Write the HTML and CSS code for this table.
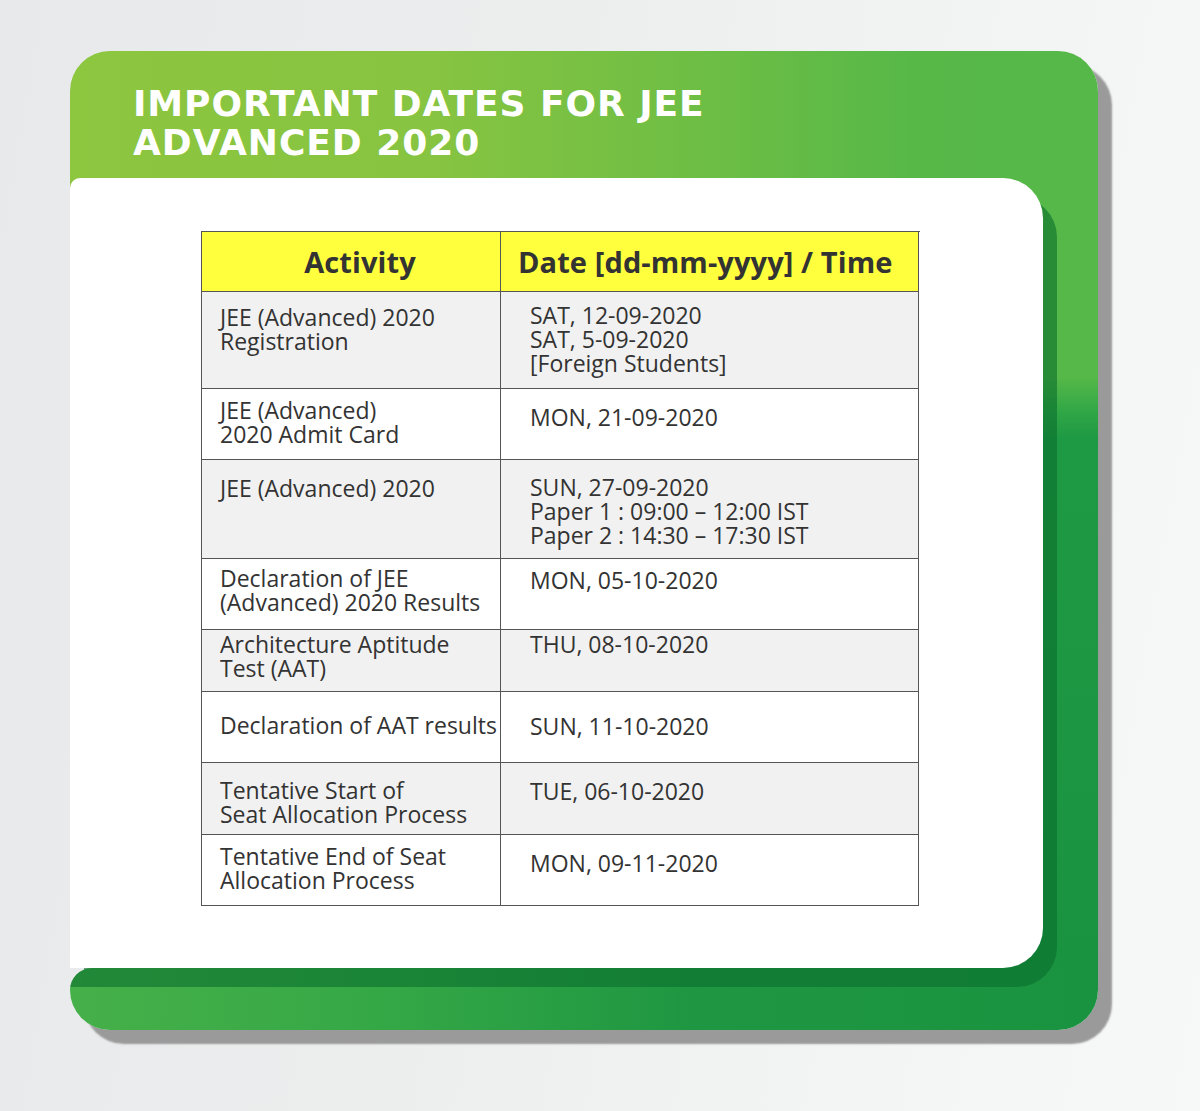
FILE: index.html
```html
<!DOCTYPE html>
<html lang="en">
<head>
<meta charset="utf-8">
<title>Important Dates for JEE Advanced 2020</title>
<link rel="stylesheet" href="styles.css">
</head>
<body>
<div class="card">
  <div class="head">
    <h1 class="title">IMPORTANT DATES FOR JEE<br>ADVANCED 2020</h1>
  </div>
  <div class="middle">
    <div class="panel">
      <div class="dates">
        <div class="th th-activity">Activity</div>
        <div class="th th-date">Date [dd-mm-yyyy] / Time</div>

        <div class="td odd p13">JEE (Advanced) 2020<br>Registration</div>
        <div class="td odd right p11">SAT, 12-09-2020<br>SAT, 5-09-2020<br>[Foreign Students]</div>

        <div class="td p9">JEE (Advanced)<br>2020 Admit Card</div>
        <div class="td right p16">MON, 21-09-2020</div>

        <div class="td odd p16">JEE (Advanced) 2020</div>
        <div class="td odd right p15">SUN, 27-09-2020<br>Paper 1 : 09:00 – 12:00 IST<br>Paper 2 : 14:30 – 17:30 IST</div>

        <div class="td p7">Declaration of JEE<br>(Advanced) 2020 Results</div>
        <div class="td right p9">MON, 05-10-2020</div>

        <div class="td odd p2">Architecture Aptitude<br>Test (AAT)</div>
        <div class="td odd right p2">THU, 08-10-2020</div>

        <div class="td p21">Declaration of AAT results</div>
        <div class="td right p22">SUN, 11-10-2020</div>

        <div class="td odd p15">Tentative Start of<br>Seat Allocation Process</div>
        <div class="td odd right p16">TUE, 06-10-2020</div>

        <div class="td p9">Tentative End of Seat<br>Allocation Process</div>
        <div class="td right p16">MON, 09-11-2020</div>
      </div>
    </div>
    <div class="strip"></div>
  </div>
  <div class="foot"></div>
</div>
</body>
</html>
```
FILE: styles.css
```css
html, body {
  margin: 0;
  padding: 0;
}
body {
  width: 1200px;
  height: 1111px;
  overflow: hidden;
  background: linear-gradient(100deg, #e8e9eb 0%, #eceded 40%, #f3f4f4 75%, #f7f8f8 100%);
  font-family: "Open Sans", "Noto Sans", sans-serif;
  padding-top: 51px;
  padding-left: 70px;
  box-sizing: border-box;
}
.card {
  width: 1028px;
  height: 979px;
  border-radius: 40px;
  box-shadow: 14px 14px 2px #9a9a9a;
  display: flex;
  flex-direction: column;
}
.head {
  height: 127px;
  flex: none;
  border-radius: 40px 40px 0 0;
  background: linear-gradient(90deg, #8dc63f 0%, #87c441 35%, #6abd45 65%, #57b848 82%, #55b848 100%);
  padding: 33px 0 0 63px;
  box-sizing: border-box;
}
.title {
  margin: 0;
  font-family: "DejaVu Sans", "Liberation Sans", sans-serif;
  font-weight: 700;
  font-size: 36px;
  line-height: 39px;
  letter-spacing: 0.95px;
  color: #ffffff;
}
.middle {
  display: flex;
  height: 790px;
  flex: none;
  background:
    linear-gradient(90deg, #8dc63f 0px, #87c441 20px, rgba(135, 196, 65, 0) 60px) 0 0 / 100% 20px no-repeat,
    linear-gradient(180deg, #55b848 0px, #55b848 200px, #2fa646 235px, #1f9a44 260px, #1a9340 100%);
}
.panel {
  position: relative;
  z-index: 1;
  width: 973px;
  height: 790px;
  flex: none;
  background: #ffffff;
  border-radius: 10px 40px 40px 0;
  box-shadow: 14px 19px 0 rgba(10, 110, 45, 0.6);
  padding: 53px 0 0 131px;
  box-sizing: border-box;
}
.strip {
  flex: 1;
}
.foot {
  height: 62px;
  flex: none;
  border-radius: 22px 0 40px 40px;
  background:
    linear-gradient(rgba(10, 110, 45, 0.6), rgba(10, 110, 45, 0.6)) 0 0 / 14px 19px no-repeat,
    linear-gradient(90deg, #46b049 0%, #35a846 30%, #1f9742 60%, #1a9340 100%);
}
.dates {
  display: grid;
  grid-template-columns: 299px 418px;
  grid-template-rows: 60px 97px 71px 99px 71px 62px 71px 72px 71px;
  width: 718px;
  border-top: 1px solid #555555;
  border-left: 1px solid #555555;
  color: #333333;
}
.th, .td {
  border-right: 1px solid #555555;
  border-bottom: 1px solid #555555;
  box-sizing: border-box;
  white-space: nowrap;
}
.th {
  background: #ffff3d;
  font-weight: 700;
  font-size: 29px;
  line-height: 32px;
  padding-top: 14px;
  letter-spacing: 0.1px;
}
.th-activity {
  text-align: center;
  padding-left: 18px;
}
.th-date {
  padding-left: 17px;
}
.td {
  background: #ffffff;
  font-size: 23px;
  line-height: 24px;
  letter-spacing: 0;
  padding-left: 18px;
}
.td.right {
  padding-left: 29px;
}
.td.odd {
  background: #f1f1f1;
}
.p2 { padding-top: 2px; }
.p7 { padding-top: 7px; }
.p9 { padding-top: 9px; }
.p11 { padding-top: 11px; }
.p13 { padding-top: 13px; }
.p15 { padding-top: 15px; }
.p16 { padding-top: 16px; }
.p21 { padding-top: 21px; }
.p22 { padding-top: 22px; }
```
